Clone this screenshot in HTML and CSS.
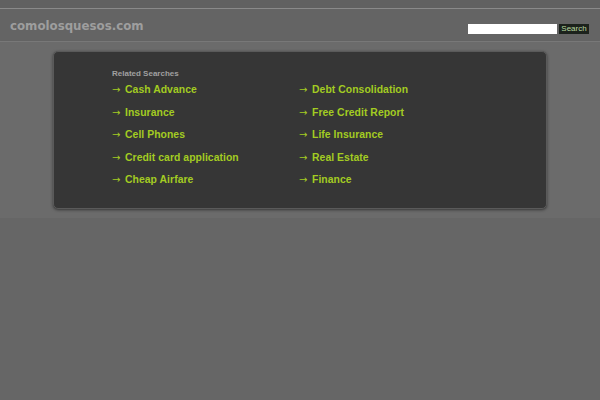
FILE: index.html
```html
<!DOCTYPE html>
<html>
<head>
<meta charset="utf-8">
<link rel="stylesheet" href="styles.css">
</head>
<body>
<div class="topbar"></div>
<div class="header">
  <div class="logo">comolosquesos.com</div>
  <form class="search">
    <input class="search-input" type="text">
    <button class="search-btn" type="button">Search</button>
  </form>
</div>
<div class="main">
  <div class="box">
    <div class="box-title">Related Searches</div>
    <div class="links">
      <a class="link" href="#">Cash Advance</a>
      <a class="link" href="#">Debt Consolidation</a>
      <a class="link" href="#">Insurance</a>
      <a class="link" href="#">Free Credit Report</a>
      <a class="link" href="#">Cell Phones</a>
      <a class="link" href="#">Life Insurance</a>
      <a class="link" href="#">Credit card application</a>
      <a class="link" href="#">Real Estate</a>
      <a class="link" href="#">Cheap Airfare</a>
      <a class="link" href="#">Finance</a>
    </div>
  </div>
</div>
</body>
</html>
```
FILE: styles.css
```css
html, body {
  margin: 0;
  padding: 0;
  background: #666666;
  font-family: "Liberation Sans", Arial, sans-serif;
}
.topbar {
  height: 8px;
  background: #616161;
  border-bottom: 1px solid #8a8a8a;
}
.header {
  height: 32px;
  background: #646464;
  border-bottom: 1px solid #7a7a7a;
  display: flex;
  justify-content: space-between;
  align-items: center;
  padding: 0 11px 0 10px;
}
.logo {
  font-family: "DejaVu Sans", Verdana, sans-serif;
  font-weight: bold;
  font-size: 11.8px;
  color: #9e9e9e;
  margin-top: 1px;
}
.search {
  display: flex;
  align-items: center;
  gap: 2px;
  margin: 8px 0 0 0;
}
.search-input {
  width: 89px;
  height: 10px;
  border: none;
  padding: 0;
  margin: 0;
  background: #ffffff;
}
.search-btn {
  height: 10px;
  width: 30px;
  border: none;
  padding: 0;
  margin: 0;
  background: #1c221c;
  color: #b9d9a0;
  font-family: "Liberation Sans", Arial, sans-serif;
  font-size: 8px;
  line-height: 10px;
}
.main {
  background: #6b6b6b;
  padding: 9px 53px 9px 53px;
  box-shadow: 0 2px 3px rgba(0,0,0,0.35);
}
.box {
  background: #363636;
  border: 1px solid #5a5a5a;
  border-radius: 5px;
  box-shadow: 0 1px 3px rgba(0,0,0,0.5);
  padding: 17px 0 18px 58px;
  height: 121px;
}
.box-title {
  font-size: 8px;
  font-weight: bold;
  color: #a0a0a0;
  line-height: 10px;
  margin-bottom: 4px;
}
.links {
  display: grid;
  grid-template-columns: 187px 1fr;
  grid-auto-rows: 22.5px;
}
.link {
  font-size: 10.4px;
  font-weight: bold;
  color: #a3cc22;
  text-decoration: none;
  line-height: 14px;
  letter-spacing: 0.05px;
}
.link::before {
  content: "\2192";
  font-family: "DejaVu Sans", sans-serif;
  font-size: 10px;
  display: inline-block;
  width: 13px;
  font-weight: normal;
}
```
